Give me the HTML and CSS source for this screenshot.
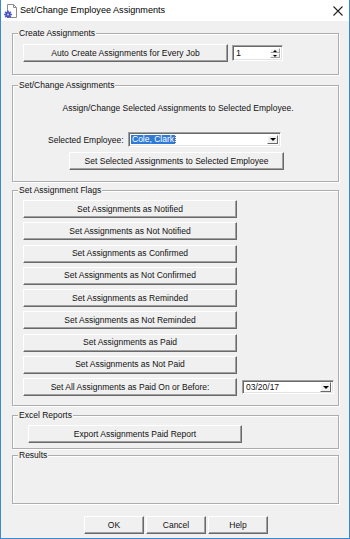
FILE: index.html
```html
<!DOCTYPE html>
<html>
<head>
<meta charset="utf-8">
<title>Set/Change Employee Assignments</title>
<link rel="stylesheet" href="styles.css">
</head>
<body>
<div class="window">
  <div class="titlebar">
    <svg class="app-icon" viewBox="0 0 13 14" width="13" height="14">
      <path d="M3.5 0.5h6l3 3v10h-9z" fill="#fff" stroke="#8c8c8c"/>
      <path d="M9.5 0.5v3h3" fill="none" stroke="#8c8c8c"/>
      <g fill="#4b52c4">
        <circle cx="4" cy="10.5" r="2.6"/>
        <rect x="3.2" y="6.6" width="1.6" height="7.8"/>
        <rect x="0.1" y="9.7" width="7.8" height="1.6"/>
        <rect x="3.2" y="6.6" width="1.6" height="7.8" transform="rotate(45 4 10.5)"/>
        <rect x="3.2" y="6.6" width="1.6" height="7.8" transform="rotate(-45 4 10.5)"/>
      </g>
      <circle cx="4" cy="10.5" r="1" fill="#c8ccf0"/>
    </svg>
    <span class="title">Set/Change Employee Assignments</span>
    <svg class="close" viewBox="0 0 10 10" width="10" height="10">
      <path d="M0.5 0.5L9.5 9.5M9.5 0.5L0.5 9.5" stroke="#222" stroke-width="1.1" fill="none"/>
    </svg>
  </div>
  <div class="client">
    <div class="group g-create">
      <div class="legend">Create Assignments</div>
      <div class="create-row">
        <button class="btn b-auto">Auto Create Assignments for Every Job</button>
        <div class="spin sunken">
          <span class="spin-val">1</span>
          <div class="spin-btns">
            <span class="spin-btn"><i class="arr-up"></i></span>
            <span class="spin-btn"><i class="arr-down"></i></span>
          </div>
        </div>
      </div>
    </div>

    <div class="group g-change">
      <div class="legend">Set/Change Assignments</div>
      <div class="desc">Assign/Change Selected Assignments to Selected Employee.</div>
      <div class="emp-row">
        <span class="emp-label">Selected Employee:</span>
        <div class="combo sunken emp-combo">
          <span class="combo-text"><span class="sel">Cole, Clark</span></span>
          <span class="drop"><i class="arr-down big"></i></span>
        </div>
      </div>
      <button class="btn b-setsel">Set Selected Assignments to Selected Employee</button>
    </div>

    <div class="group g-flags">
      <div class="legend">Set Assignment Flags</div>
      <div class="flags">
        <button class="btn b-flag">Set Assignments as Notified</button>
        <button class="btn b-flag">Set Assignments as Not Notified</button>
        <button class="btn b-flag">Set Assignments as Confirmed</button>
        <button class="btn b-flag">Set Assignments as Not Confirmed</button>
        <button class="btn b-flag">Set Assignments as Reminded</button>
        <button class="btn b-flag">Set Assignments as Not Reminded</button>
        <button class="btn b-flag">Set Assignments as Paid</button>
        <button class="btn b-flag">Set Assignments as Not Paid</button>
        <div class="paid-row">
          <button class="btn b-flag">Set All Assignments as Paid On or Before:</button>
          <div class="combo sunken date-combo">
            <span class="combo-text">03/20/17</span>
            <span class="drop"><i class="arr-down big"></i></span>
          </div>
        </div>
      </div>
    </div>

    <div class="group g-excel">
      <div class="legend">Excel Reports</div>
      <button class="btn b-export">Export Assignments Paid Report</button>
    </div>

    <div class="group g-results">
      <div class="legend">Results</div>
    </div>

    <div class="footer">
      <button class="btn b-dlg">OK</button>
      <button class="btn b-dlg">Cancel</button>
      <button class="btn b-dlg">Help</button>
    </div>
  </div>
</div>
</body>
</html>
```

FILE: styles.css
```css
* { box-sizing: border-box; }

body {
  margin: 0;
  font-family: "Liberation Sans", Arial, sans-serif;
  font-size: 8.5px;
  color: #111;
}

.window {
  width: 350px;
  height: 539px;
  border: 1px solid #3a89d8;
  border-top: none;
  background: #f0f0f0;
  display: flex;
  flex-direction: column;
}

.titlebar {
  height: 21px;
  background: #fff;
  display: flex;
  align-items: center;
  padding: 0 6px 0 3px;
  flex: none;
}

.app-icon { flex: none; margin-right: 3px; }

.title {
  flex: 1;
  font-size: 9.1px;
  color: #000;
  line-height: 11px;
}

.close { flex: none; }

.client {
  flex: 1;
  padding: 0 10px 0 11px;
  display: flex;
  flex-direction: column;
}

.group {
  border: 1px solid #adadad;
  box-shadow: inset 1px 1px 0 #fff, 1px 1px 0 #fff;
  flex: none;
}

.legend {
  width: fit-content;
  height: 10px;
  line-height: 10px;
  margin: -6px 0 0 5px;
  padding: 0 1px;
  background: #f0f0f0;
  white-space: nowrap;
}

.btn {
  font-family: inherit;
  font-size: 8.5px;
  color: #111;
  background: #f0f0f0;
  border: 1px solid;
  border-color: #fff #696969 #696969 #fff;
  box-shadow: inset -1px -1px 0 #a0a0a0;
  padding: 0 0 1px;
  margin: 0;
  height: 18px;
  line-height: 14px;
  text-align: center;
  white-space: nowrap;
  display: block;
}

.sunken {
  background: #fff;
  border: 1px solid;
  border-color: #a0a0a0 #fff #fff #a0a0a0;
  box-shadow: inset 1px 1px 0 #696969, inset -1px -1px 0 #e3e3e3;
}

/* Create group */
.g-create { margin-top: 12px; height: 42px; }

.create-row {
  margin: 6px 0 0 10px;
  display: flex;
  align-items: center;
  gap: 4px;
}

.b-auto { width: 205px; }

.spin {
  width: 51px;
  height: 16px;
  display: flex;
  padding: 2px;
}

.spin-val {
  flex: 1;
  line-height: 11px;
  font-size: 9px;
  padding-left: 1px;
}

.spin-btns {
  width: 10px;
  display: flex;
  flex-direction: column;
}

.spin-btn {
  flex: 1;
  background: #f0f0f0;
  border-right: 1px solid #a0a0a0;
  border-bottom: 1px solid #a0a0a0;
  border-top: 1px solid #fff;
  border-left: 1px solid #fff;
  display: flex;
  align-items: center;
  justify-content: center;
}

.arr-up, .arr-down {
  display: block;
  width: 0;
  height: 0;
  border-left: 2px solid transparent;
  border-right: 2px solid transparent;
}
.arr-up { border-bottom: 2px solid #000; }
.arr-down { border-top: 2px solid #000; }
.arr-down.big {
  border-left-width: 3px;
  border-right-width: 3px;
  border-top-width: 3px;
}

/* Change group */
.g-change { margin-top: 10px; height: 97px; }

.desc {
  margin-top: 13px;
  line-height: 10px;
  text-align: center;
  padding-left: 5px;
}

.emp-row {
  margin: 19px 0 0 35px;
  display: flex;
  align-items: center;
}

.emp-label {
  width: 80px;
  line-height: 10px;
}

.combo {
  display: flex;
  align-items: stretch;
  padding: 2px;
}

.emp-combo { width: 153px; height: 15px; }

.combo-text {
  flex: 1;
  line-height: 9px;
  white-space: nowrap;
  overflow: hidden;
}

.sel {
  background: #2f7ad6;
  color: #fff;
  padding: 0 1px;
  outline: 1px dotted #6d6d6d;
  display: inline-block;
  line-height: 9px;
}

.drop {
  width: 11px;
  background: #f0f0f0;
  border: 1px solid;
  border-color: #fff #696969 #696969 #fff;
  display: flex;
  align-items: center;
  justify-content: center;
}

.b-setsel {
  margin: 5px 0 0 56px;
  width: 215px;
}

/* Flags group */
.g-flags { margin-top: 8px; height: 216px; }

.flags {
  margin: 5px 0 0 10px;
  display: flex;
  flex-direction: column;
  gap: 4.25px;
}

.b-flag { width: 214px; flex: none; }

.paid-row {
  display: flex;
  align-items: center;
  gap: 5px;
}

.date-combo { width: 92px; height: 14px; padding: 1px 2px; }
.date-combo .combo-text { padding-left: 1px; line-height: 10px; }

/* Excel group */
.g-excel { margin-top: 9px; height: 34px; }

.b-export {
  margin: 5px 0 0 15px;
  width: 214px;
}

/* Results */
.g-results { margin-top: 6px; height: 49px; }

/* Footer */
.footer {
  margin-top: 12px;
  display: flex;
  justify-content: center;
  gap: 2px;
  padding-left: 1px;
}

.b-dlg { width: 60px; }
```
